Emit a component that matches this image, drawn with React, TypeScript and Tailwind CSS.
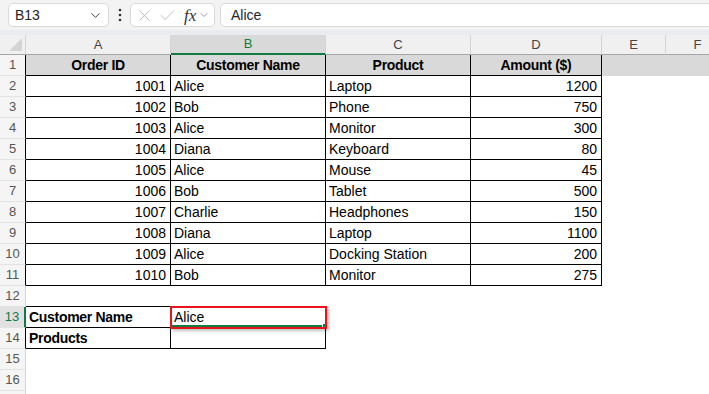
import { ChevronDown, X, Check } from "lucide-react";

const widths = ["w-[145px]", "w-[155px]", "w-[145px]", "w-[131px]", "w-[64px]", "w-[64px]"];
const letters = ["A", "B", "C", "D", "E", "F"];

const orders = [
  ["1001", "Alice", "Laptop", "1200"],
  ["1002", "Bob", "Phone", "750"],
  ["1003", "Alice", "Monitor", "300"],
  ["1004", "Diana", "Keyboard", "80"],
  ["1005", "Alice", "Mouse", "45"],
  ["1006", "Bob", "Tablet", "500"],
  ["1007", "Charlie", "Headphones", "150"],
  ["1008", "Diana", "Laptop", "1100"],
  ["1009", "Alice", "Docking Station", "200"],
  ["1010", "Bob", "Monitor", "275"],
];

function RowHead({ n, dark, selected }: { n?: number; dark?: boolean; selected?: boolean }) {
  if (selected) {
    return (
      <div className="w-[26px] shrink-0 h-full flex items-center justify-center text-[13px] text-[#107c41] bg-[#e1e1e1] border-b border-b-[#e3e3e3] border-r-2 border-r-[#107c41]">
        {n}
      </div>
    );
  }
  return (
    <div
      className={
        "w-[26px] shrink-0 h-full flex items-center justify-center text-[13px] text-[#555] bg-[#f5f5f5] border-b border-b-[#e3e3e3] border-r " +
        (dark ? "border-r-black" : "border-r-[#d4d4d4]")
      }
    >
      {n}
    </div>
  );
}

type CellProps = {
  col: number;
  text?: string;
  right?: boolean;
  center?: boolean;
  bold?: boolean;
  border?: "box" | "bottom" | "none";
};

function Cell({ col, text, right, center, bold, border = "none" }: CellProps) {
  const b =
    border === "box"
      ? "border-r border-b border-black"
      : border === "bottom"
        ? "border-b border-black"
        : "";
  const align = right ? "justify-end pr-[4px]" : center ? "justify-center" : "justify-start pl-[3px]";
  return (
    <div
      className={`${widths[col]} shrink-0 h-full flex items-center pt-[1px] overflow-hidden whitespace-nowrap text-[14px] text-black ${align} ${b} ${bold ? "font-bold tracking-[-0.3px]" : ""}`}
    >
      {text}
    </div>
  );
}

export default function App() {
  return (
    <div
      className="relative w-[709px] h-[394px] overflow-hidden bg-white"
      style={{ fontFamily: '"Liberation Sans", Arial, sans-serif' }}
    >
      {/* formula bar */}
      <div className="h-[30px] bg-[#f3f3f3] flex items-start pt-[3px] pl-[8px]">
        <div className="w-[101px] h-[24px] shrink-0 bg-white border border-[#dadada] rounded-[5px] flex items-center justify-between pl-[6px] pr-[5px]">
          <span className="text-[14px] text-[#242424]">B13</span>
          <ChevronDown size={15} strokeWidth={1.6} className="text-[#424242]" />
        </div>
        <div className="w-[21px] h-[24px] shrink-0 flex items-center justify-center">
          <svg width="4" height="14" viewBox="0 0 4 14">
            <circle cx="2" cy="2" r="1.3" fill="#333" />
            <circle cx="2" cy="7" r="1.3" fill="#333" />
            <circle cx="2" cy="12" r="1.3" fill="#333" />
          </svg>
        </div>
        <div className="w-[85px] h-[24px] shrink-0 bg-white border border-[#dadada] rounded-[5px] flex items-center pl-[4px]">
          <X size={19} strokeWidth={1.1} className="text-[#b4b4b4]" />
          <Check size={19} strokeWidth={1.1} className="text-[#b4b4b4] ml-[4px]" />
          <span
            className="ml-[7px] text-[17px] italic text-[#333] leading-none"
            style={{ fontFamily: '"Liberation Serif", serif' }}
          >
            fx
          </span>
          <ChevronDown size={12} strokeWidth={1.5} className="text-[#777] ml-[2px]" />
        </div>
        <div className="flex-1 h-[24px] ml-[5px] -mr-[6px] bg-white border border-[#dadada] rounded-[5px] flex items-center pl-[10px]">
          <span className="text-[14px] text-[#242424]">Alice</span>
        </div>
      </div>
      <div className="h-[5px] bg-[#e8ebef]" />

      {/* column headers */}
      <div className="flex h-[20px]">
        <div className="relative w-[26px] shrink-0 h-full bg-[#f0f0f0] border-r border-b border-r-[#d4d4d4] border-b-[#a6a6a6]">
          <svg className="absolute right-[3px] bottom-[3px]" width="13" height="13" viewBox="0 0 13 13">
            <polygon points="13,0 13,13 0,13" fill="#d4d4d4" />
          </svg>
        </div>
        {letters.map((l, i) =>
          i === 1 ? (
            <div
              key={l}
              className={`${widths[i]} shrink-0 h-full flex items-center justify-center text-[13px] text-[#107c41] bg-[#d9d9d9] border-r border-r-[#d4d4d4] border-b-2 border-b-[#107c41]`}
            >
              {l}
            </div>
          ) : (
            <div
              key={l}
              className={`${widths[i]} shrink-0 h-full flex items-center justify-center text-[13px] text-[#444] bg-[#f0f0f0] border-r border-r-[#d4d4d4] border-b border-b-[#a6a6a6]`}
            >
              {l}
            </div>
          )
        )}
        <div className="flex-1 bg-[#f0f0f0] border-b border-b-[#a6a6a6]" />
      </div>

      {/* row 1 */}
      <div className="flex h-[21px]">
        <RowHead n={1} dark />
        <div className="flex flex-1 bg-[#d9d9d9]">
          <Cell col={0} text="Order ID" center bold border="box" />
          <Cell col={1} text="Customer Name" center bold border="box" />
          <Cell col={2} text="Product" center bold border="box" />
          <Cell col={3} text="Amount ($)" center bold border="box" />
        </div>
      </div>

      {/* data rows */}
      {orders.map((o, i) => (
        <div key={o[0]} className="flex h-[21px]">
          <RowHead n={i + 2} dark />
          <Cell col={0} text={o[0]} right border="box" />
          <Cell col={1} text={o[1]} border="box" />
          <Cell col={2} text={o[2]} border="box" />
          <Cell col={3} text={o[3]} right border="box" />
        </div>
      ))}

      {/* row 12 */}
      <div className="flex h-[21px]">
        <RowHead n={12} />
        <Cell col={0} border="bottom" />
        <Cell col={1} border="bottom" />
      </div>

      {/* lookup block */}
      <div className="flex h-[21px]">
        <RowHead n={13} selected />
        <Cell col={0} text="Customer Name" bold border="box" />
        <Cell col={1} text="Alice" border="box" />
      </div>
      <div className="flex h-[21px]">
        <RowHead n={14} dark />
        <Cell col={0} text="Products" bold border="box" />
        <Cell col={1} border="box" />
      </div>

      {[15, 16].map((n) => (
        <div key={n} className="flex h-[21px]">
          <RowHead n={n} />
        </div>
      ))}
      <div className="flex h-[21px]">
        <RowHead />
      </div>

      {/* active cell: selection edge, fill handle, red annotation */}
      <div className="absolute left-[171px] top-[325px] w-[154px] h-[2px] bg-[#107c41]" />
      <div className="absolute left-[322px] top-[323px] w-[5px] h-[5px] bg-[#107c41] border border-white" />
      <div className="absolute left-[170px] top-[306px] w-[157px] h-[23px] border-2 border-[#e8141a] shadow-[2px_2px_3px_rgba(0,0,0,0.25)]" />
    </div>
  );
}
